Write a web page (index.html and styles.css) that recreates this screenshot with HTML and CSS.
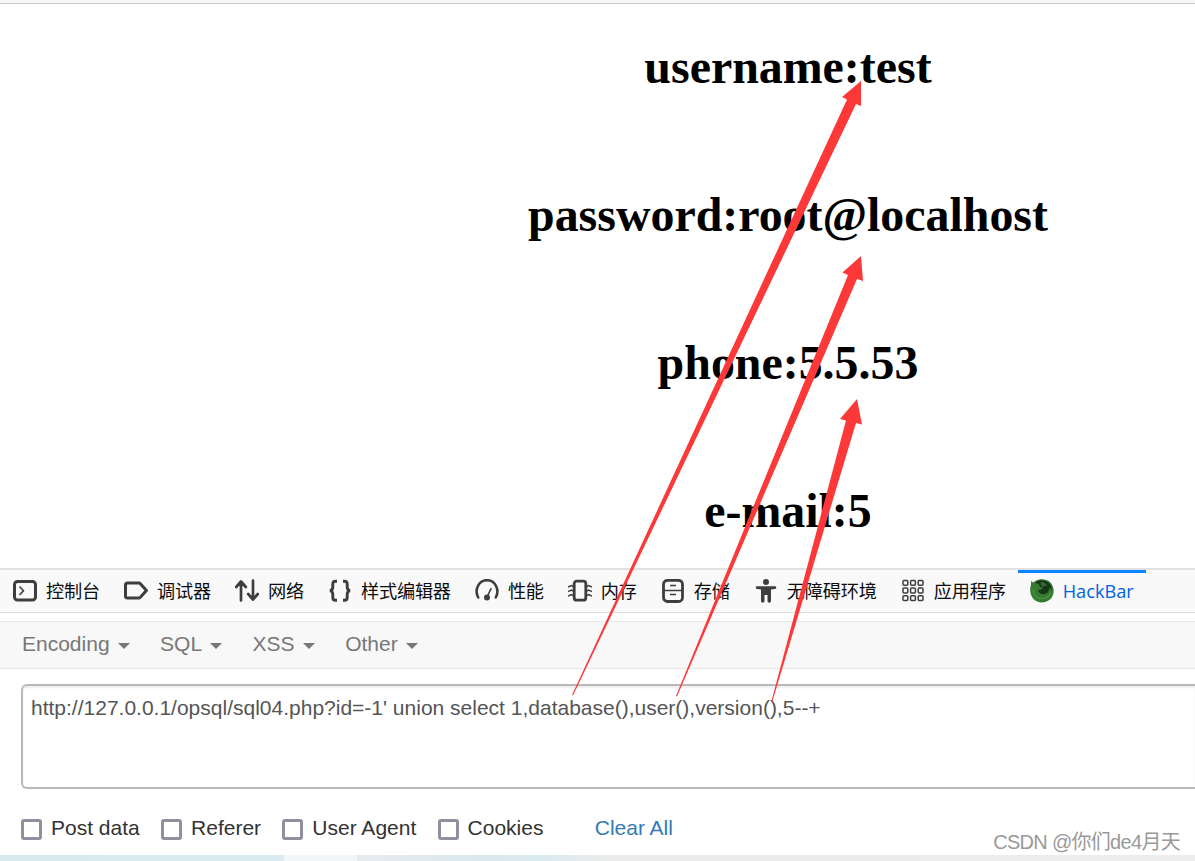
FILE: index.html
```html
<!DOCTYPE html>
<html lang="zh">

<head>
    <meta charset="utf-8">
    <meta name="viewport" content="width=device-width, initial-scale=1.0">
    <title>sql04</title>
    <link rel="stylesheet" href="styles.css">
</head>

<body>
    <main class="side">
        <h1>username:test</h1>
        <h1>password:root@localhost</h1>
        <h1>phone:5.5.53</h1>
        <h1>e-mail:5</h1>
    </main>

    <nav class="tabs">
        <div class="tab">
            <svg viewBox="0 0 24 24"><rect x="1.500" y="2.500" width="21" height="18.500" rx="3" fill="none" stroke="#3e3e3e" stroke-width="3"/><path d="M6.500 7.500l4 4.200-4 4.200" fill="none" stroke="#3e3e3e" stroke-width="1.600"/></svg>
            <span>控制台</span>
        </div>
        <div class="tab">
            <svg viewBox="0 0 24 24"><path d="M3.500 4h11.200c.7 0 1.200.2 1.700.8l6 6.700-6 6.700c-.5.500-1 .8-1.700.8H3.500c-1.300 0-2-.7-2-2V6c0-1.300.7-2 2-2z" fill="none" stroke="#3e3e3e" stroke-width="3"/></svg>
            <span>调试器</span>
        </div>
        <div class="tab">
            <svg viewBox="0 0 24 24"><path d="M6 21.500V3M1.200 8L6 2.500 10.800 8M18 1.500v18.500M13.200 15l4.800 5.500 4.800-5.500" fill="none" stroke="#3e3e3e" stroke-width="2.700" stroke-linecap="round" stroke-linejoin="round"/></svg>
            <span>网络</span>
        </div>
        <div class="tab">
            <svg viewBox="0 0 24 24"><path d="M9 2.200H7.500C5.500 2.200 4.800 3 4.800 5v3c0 2-.8 3.300-2.800 3.700 2 .4 2.800 1.700 2.800 3.700v3c0 2 .7 2.800 2.700 2.800H9M15 2.200h1.500c2 0 2.700.8 2.700 2.800v3c0 2 .8 3.300 2.800 3.700-2 .4-2.800 1.700-2.800 3.700v3c0 2-.7 2.800-2.700 2.800H15" fill="none" stroke="#3e3e3e" stroke-width="2.900"/></svg>
            <span>样式编辑器</span>
        </div>
        <div class="tab">
            <svg viewBox="0 0 24 24"><path d="M3.200 18.500C-.8 11 3.500 1.200 12 1.200S24.800 11 20.800 18.500" fill="none" stroke="#3e3e3e" stroke-width="2.600" stroke-linecap="round"/><path d="M12 18l4.300-8.800" stroke="#3e3e3e" stroke-width="1.600"/><circle cx="12" cy="18.500" r="3" fill="#3e3e3e"/></svg>
            <span>性能</span>
        </div>
        <div class="tab">
            <svg viewBox="0 0 24 24"><rect x="6.200" y="2.200" width="11.600" height="19" rx="2.500" fill="none" stroke="#3e3e3e" stroke-width="2.800"/><path d="M6 8L3.500 6.500 0 8M6 12.500L3.500 11 0 12.500M6 17l-2.500-1.500L0 17M18 8l2.500-1.500L24 8M18 12.500l2.500-1.500 3.500 1.500M18 17l2.500-1.500L24 17" fill="none" stroke="#3e3e3e" stroke-width="1.500"/></svg>
            <span>内存</span>
        </div>
        <div class="tab">
            <svg viewBox="0 0 24 24"><rect x="2.500" y="1.300" width="19" height="21.200" rx="4" fill="none" stroke="#3e3e3e" stroke-width="2.800"/><path d="M3 11.500h18M9 6.500h6M9 15.500h6" stroke="#3e3e3e" stroke-width="1.500"/></svg>
            <span>存储</span>
        </div>
        <div class="tab">
            <svg viewBox="0 0 24 24"><circle cx="12" cy="3" r="3" fill="#3e3e3e"/><path d="M3 7.300h18a1.200 1.200 0 0 1 0 2.600l-4 .5v11.600a1.400 1.400 0 0 1-3.500 0v-6h-3v6a1.400 1.400 0 0 1-3.500 0V10.400l-4-.5a1.200 1.200 0 0 1 0-2.600z" fill="#3e3e3e"/></svg>
            <span>无障碍环境</span>
        </div>
        <div class="tab">
            <svg viewBox="0 0 24 24"><g fill="none" stroke="#3e3e3e" stroke-width="1.500"><rect x="2" y="1.500" width="4.800" height="4.800" rx="1"/><rect x="9.600" y="1.500" width="4.800" height="4.800" rx="1"/><rect x="17.200" y="1.500" width="4.800" height="4.800" rx="1"/><rect x="2" y="9.100" width="4.800" height="4.800" rx="1"/><rect x="9.600" y="9.100" width="4.800" height="4.800" rx="1"/><rect x="17.200" y="9.100" width="4.800" height="4.800" rx="1"/><rect x="2" y="16.700" width="4.800" height="4.800" rx="1"/><rect x="9.600" y="16.700" width="4.800" height="4.800" rx="1"/><rect x="17.200" y="16.700" width="4.800" height="4.800" rx="1"/></g></svg>
            <span>应用程序</span>
        </div>
        <div class="tab valgt">
            <svg viewBox="0 0 24 24"><path d="M1 2l2 1.500L5.500 2C9-.5 16-.5 20 3c5 5 5 13 0 17.500-5 4-12 4-16.500-.5C-.5 15.500-.2 9 1 6z" fill="#357a30"/><path d="M5 4c3-3.500 10-4 14 0 2 2 3 5 2.500 8-.5-2-1-3-2-3.500 0 5-4 7.500-7.500 6.500-3-.5-4-2.500-3.500-4l3-.5 1.500-2-3-.5C9 6 9 5 8 4.500z" fill="#163615"/><path d="M11 3c3 0 6 2 6 4-1.500-.5-3 0-3.500 1.200C12 7 10 6 11 3z" fill="#3c6538"/><path d="M3 10c0 6 4 9.500 9 9.500s8-3 9-6" fill="none" stroke="#4a9341" stroke-width="1.400"/></svg>
            <span>HackBar</span>
        </div>
    </nav>

    <div class="menu">
        <div class="punkt">Encoding<i class="caret"></i></div>
        <div class="punkt">SQL<i class="caret"></i></div>
        <div class="punkt">XSS<i class="caret"></i></div>
        <div class="punkt">Other<i class="caret"></i></div>
    </div>

    <section class="hackbar">
        <div class="url">http://127.0.0.1/opsql/sql04.php?id=-1' union select 1,database(),user(),version(),5--+</div>
        <div class="valg">
            <label><input type="checkbox">Post data</label>
            <label><input type="checkbox">Referer</label>
            <label><input type="checkbox">User Agent</label>
            <label><input type="checkbox">Cookies</label>
            <a class="clear">Clear All</a>
        </div>
    </section>

    <footer class="bund"></footer>

    <svg class="pile" viewBox="0 0 1195 861">
        <path d="M572 695L847 99.500 842 97 861 81V106L856 104 573 695.500z"/>
        <path d="M676 696L848 275 842.500 272.500 861 256 863 281 857 279 677 696.500z"/>
        <path d="M771.500 701L846 420.500 840 419 857 399 862 424.500 856 423 772.500 701z"/>
    </svg>
    <div class="watermark">CSDN @你们de4月天</div>
</body>

</html>
```
FILE: styles.css
```css
* {
    box-sizing: border-box;
}

body {
    margin: 0;
    height: 861px;
    position: relative;
    overflow: hidden;
    display: flex;
    flex-direction: column;
    background-color: white;
    font-family: "Liberation Sans", Arial, sans-serif;
}

.side {
    height: 568px;
    border-top: 3px solid #f7f7fa;
    box-shadow: inset 0 1px #c6c6ca;
    padding: 35.500px 0 0 381px;
}

h1 {
    margin: 0 0 92.300px;
    font-family: "Liberation Serif", "Times New Roman", serif;
    font-size: 47.900px;
    line-height: 56px;
    text-align: center;
    color: black;
}

.tabs {
    display: flex;
    height: 45px;
    padding-left: 1px;
    background-color: #f9f9fa;
    border-top: 2px solid #e0e0e1;
    border-bottom: 1px solid #dedee0;
    font-family: "Noto Sans CJK SC", sans-serif;
    font-size: 18.200px;
    color: #0c0c0d;
}

.tab {
    flex: none;
    display: flex;
    align-items: center;
    gap: 9px;
    padding: 0 12px;
    white-space: nowrap;
}

.tab svg {
    width: 24px;
    height: 24px;
}

.tab span {
    letter-spacing: -0.2px;
    line-height: 26px;
    padding-bottom: 2px;
}

.valgt {
    width: 128px;
    box-shadow: inset 0 3px #0a84ff;
    color: #0060df;
    font-family: "Open Sans", "Noto Sans", sans-serif;
}

.valgt span {
    letter-spacing: 0;
    padding-bottom: 0;
}

.menu {
    display: flex;
    gap: 30.500px;
    align-items: center;
    height: 48px;
    margin-top: 8px;
    padding: 0 22px 3px;
    background-color: #f8f8f8;
    border-top: 1px solid #e7e7e7;
    border-bottom: 1px solid #e7e7e7;
    font-size: 21px;
    color: #777;
}

.punkt {
    display: flex;
    align-items: center;
}

.caret {
    margin: 4px 0 0 8px;
    border-top: 6px solid #777;
    border-left: 6px solid transparent;
    border-right: 6px solid transparent;
}

.hackbar {
    flex: 1;
    padding: 15px 0 0 21px;
}

.url {
    height: 105px;
    padding: 9px 8px;
    border: 2px solid #b9b9b9;
    border-right: 0;
    border-radius: 6px 0 0 6px;
    box-shadow: inset 0 2px 2px rgba(0, 0, 0, 0.07);
    font-size: 21px;
    line-height: 26px;
    color: #555;
}

.valg {
    display: flex;
    align-items: center;
    gap: 21.300px;
    height: 30px;
    margin-top: 24px;
    font-size: 21px;
    color: #333;
}

.valg label {
    display: flex;
    align-items: center;
}

.valg input {
    appearance: none;
    width: 21px;
    height: 21px;
    margin: 2px 9px 0 0;
    border: 3px solid #8f8f9d;
    border-radius: 3px;
    background-color: white;
}

.clear {
    margin-left: 30px;
    color: #337ab7;
}

.bund {
    height: 6px;
    background: linear-gradient(90deg, #d8e9f0 0, #dcebf2 284px, #f1f6f8 284px, #f1f6f8 357px, #e6ebed 357px, #dbe9ef 480px, #dcebf0 550px, #ebebeb 610px, #ededed 100%);
}

.pile {
    position: absolute;
    top: 0;
    left: 0;
    width: 1195px;
    height: 861px;
    fill: #fd3838;
    pointer-events: none;
}

.watermark {
    position: absolute;
    right: 15px;
    bottom: 5px;
    font-family: "Liberation Sans", "Noto Sans CJK SC", sans-serif;
    font-size: 20px;
    letter-spacing: -0.700px;
    line-height: 28px;
    color: #999;
    white-space: nowrap;
}
```
